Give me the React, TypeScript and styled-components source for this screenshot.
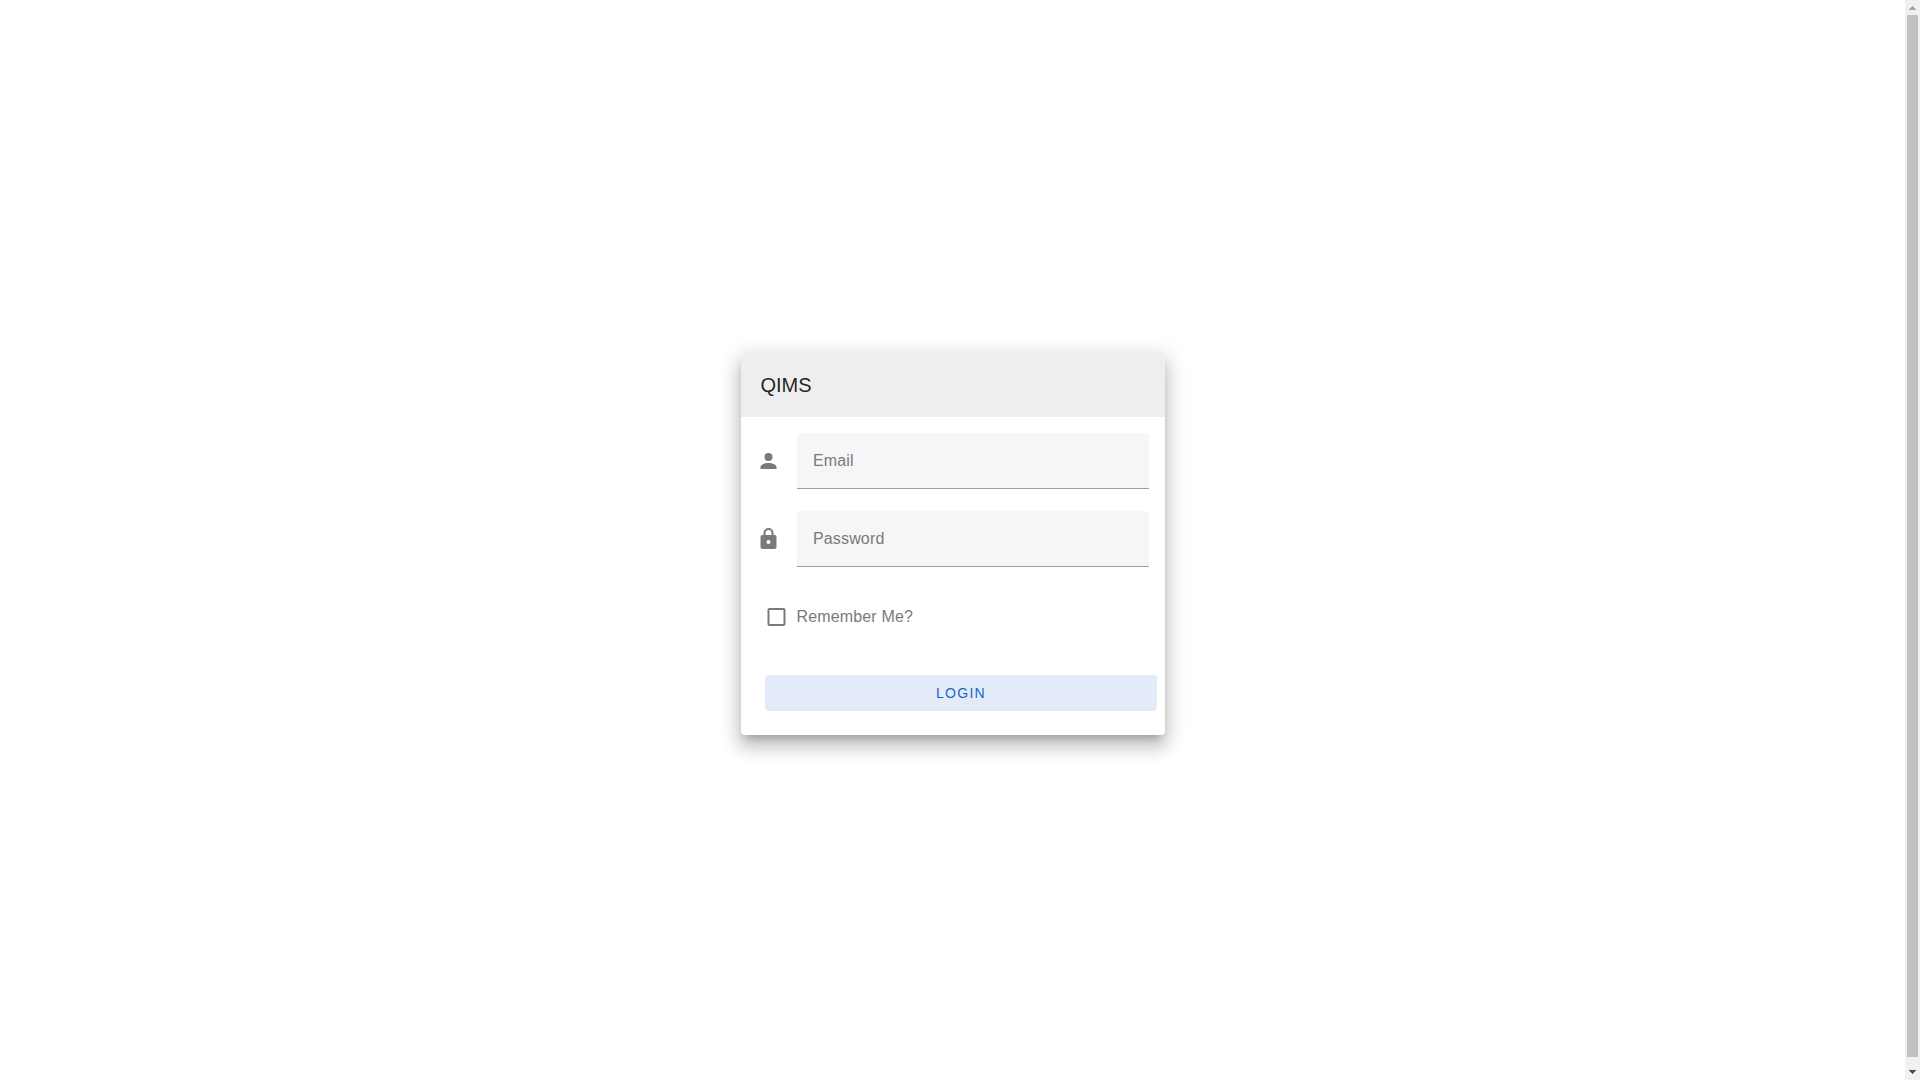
import React, { useState } from 'react'

import styled, { createGlobalStyle } from 'styled-components'

const ACCOUNT =
  'M12 4a4 4 0 0 1 4 4 4 4 0 0 1-4 4 4 4 0 0 1-4-4 4 4 0 0 1 4-4m0 10c4.42 0 8 1.79 8 4v2H4v-2c0-2.21 3.58-4 8-4z'
const LOCK =
  'M12 17a2 2 0 0 0 2-2 2 2 0 0 0-2-2 2 2 0 0 0-2 2 2 2 0 0 0 2 2m6-9a2 2 0 0 1 2 2v10a2 2 0 0 1-2 2H6a2 2 0 0 1-2-2V10a2 2 0 0 1 2-2h1V6a5 5 0 0 1 5-5 5 5 0 0 1 5 5v2h1m-6-5a3 3 0 0 0-3 3v2h6V6a3 3 0 0 0-3-3z'
const BOX_BLANK =
  'M19 3H5c-1.11 0-2 .89-2 2v14a2 2 0 0 0 2 2h14a2 2 0 0 0 2-2V5a2 2 0 0 0-2-2m0 2v14H5V5h14z'
const BOX_MARKED =
  'M19 3H5a2 2 0 0 0-2 2v14a2 2 0 0 0 2 2h14a2 2 0 0 0 2-2V5a2 2 0 0 0-2-2m0 2v14H5V5h14m-9 12-4-4 1.4-1.4L10 14.2l6.6-6.6L18 9z'

type FieldProps = {
  icon: string
  label: string
  type: string
}

const Field = ({ icon, label, type }: FieldProps) => (
  <FieldRow>
    <Icon viewBox='0.5 0 24 24'>
      <path d={icon} />
    </Icon>
    <Input type={type} placeholder={label} aria-label={label} />
  </FieldRow>
)

const App = () => {
  const [remember, setRemember] = useState(false)

  return (
    <Page>
      <GlobalStyle />
      <Main>
        <Card>
          <Toolbar>QIMS</Toolbar>
          <Form onSubmit={e => e.preventDefault()}>
            <Field icon={ACCOUNT} label='Email' type='email' />
            <Field icon={LOCK} label='Password' type='password' />
            <Remember type='button' onClick={() => setRemember(!remember)}>
              <Icon viewBox='0.5 0 24 24'>
                <path d={remember ? BOX_MARKED : BOX_BLANK} />
              </Icon>
              Remember Me?
            </Remember>
            <LoginButton>Login</LoginButton>
          </Form>
        </Card>
      </Main>
      <ScrollTrack>
        <ScrollArrow viewBox='0 0 15 15' fill='#a3a3a3'>
          <path d='M7 6h1v1h1v1h1v1h1v1H4V9h1V8h1V7h1z' />
        </ScrollArrow>
        <ScrollThumb />
        <ScrollArrow viewBox='0 0 15 15' fill='#505050'>
          <path d='M4 5h7v1h-1v1H9v1H8v1H7V8H6V7H5V6H4z' />
        </ScrollArrow>
      </ScrollTrack>
    </Page>
  )
}

export default App

const GlobalStyle = createGlobalStyle`
  * {
    box-sizing: border-box;
  }

  body {
    margin: 0;
    overflow: hidden;
    background: #fff;
    font-family: 'Liberation Sans', Arial, sans-serif;
  }
`

const Page = styled.div`
  display: flex;
  height: 100vh;
`

const Main = styled.main`
  flex: 1;
  display: flex;
  justify-content: center;
  align-items: center;
  padding-top: 8px;
`

const Card = styled.div`
  width: 424px;
  height: 382px;
  border-radius: 4px;
  overflow: hidden;
  background: #fff;
  box-shadow: 0 7px 8px -4px rgba(0, 0, 0, 0.2),
    0 12px 17px 2px rgba(0, 0, 0, 0.14), 0 5px 22px 4px rgba(0, 0, 0, 0.12);
`

const Toolbar = styled.header`
  height: 64px;
  padding-left: 20px;
  background: #eee;
  color: rgba(0, 0, 0, 0.87);
  font-size: 20px;
  line-height: 64px;
`

const Form = styled.form`
  display: flex;
  flex-direction: column;
  padding: 16px;
`

const FieldRow = styled.div`
  display: flex;
  align-items: center;
  gap: 16px;
  margin-bottom: 22px;
`

const Icon = styled.svg`
  flex: none;
  width: 24px;
  height: 24px;
  fill: #7a7a7a;
`

const Input = styled.input`
  flex: 1;
  min-width: 0;
  height: 56px;
  padding: 0 16px 0 16.5px;
  border: 0;
  border-bottom: 1px solid #9e9e9e;
  border-radius: 4px 4px 0 0;
  outline: none;
  background: #f6f6f6;
  font: 16px 'Liberation Sans', Arial, sans-serif;
  letter-spacing: 0.009375em;

  &::placeholder {
    color: #7a7a7a;
    opacity: 1;
  }
`

const Remember = styled.button`
  display: flex;
  align-items: center;
  gap: 8px;
  height: 56px;
  padding: 0 0 0 8px;
  border: 0;
  background: none;
  color: #7a7a7a;
  font: 16px 'Liberation Sans', Arial, sans-serif;
  letter-spacing: 0.009375em;
`

const LoginButton = styled.button`
  height: 36px;
  margin: 30px -8px 0 8px;
  padding: 0 0 0 1px;
  border: 0;
  border-radius: 4px;
  background: #e3ebf8;
  color: #1867c0;
  font: 500 14px 'Liberation Sans', Arial, sans-serif;
  letter-spacing: 0.0892857em;
  text-transform: uppercase;
`

const ScrollTrack = styled.div`
  display: flex;
  flex-direction: column;
  width: 15px;
  background: #f1f1f1;
`

const ScrollArrow = styled.svg`
  flex: none;
  width: 15px;
  height: 15px;
  shape-rendering: crispEdges;
`

const ScrollThumb = styled.div`
  height: 1042px;
  margin: 0 2px auto;
  background: #c1c1c1;
`
